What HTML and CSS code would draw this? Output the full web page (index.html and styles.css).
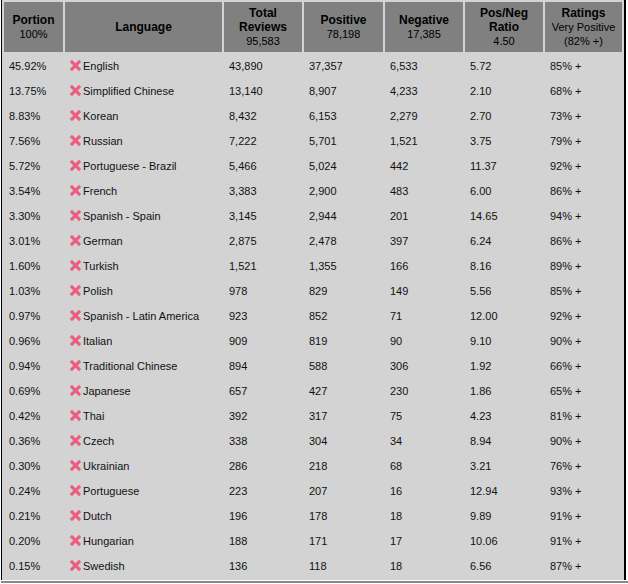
FILE: index.html
```html
<!DOCTYPE html>
<html lang="en">
<head>
    <meta charset="UTF-8">
    <meta name="viewport" content="width=device-width, initial-scale=1.0">
    <title>Reviews by Language</title>
    <link rel="stylesheet" href="styles.css">
</head>
<body>
    <div class="frame">
        <table class="reviews">
            <colgroup>
                <col class="c-portion">
                <col class="c-lang">
                <col class="c-total">
                <col class="c-pos">
                <col class="c-neg">
                <col class="c-ratio">
                <col class="c-rating">
            </colgroup>
            <thead>
                <tr>
                    <th><b>Portion</b><br>100%</th>
                    <th><b>Language</b></th>
                    <th><b>Total<br>Reviews</b><br>95,583</th>
                    <th><b>Positive</b><br>78,198</th>
                    <th><b>Negative</b><br>17,385</th>
                    <th><b>Pos/Neg<br>Ratio</b><br>4.50</th>
                    <th><b>Ratings</b><br>Very Positive<br>(82% +)</th>
                </tr>
            </thead>
            <tbody>
                <tr><td>45.92%</td><td><span class="x"></span>English</td><td>43,890</td><td>37,357</td><td>6,533</td><td>5.72</td><td>85% +</td></tr>
                <tr><td>13.75%</td><td><span class="x"></span>Simplified Chinese</td><td>13,140</td><td>8,907</td><td>4,233</td><td>2.10</td><td>68% +</td></tr>
                <tr><td>8.83%</td><td><span class="x"></span>Korean</td><td>8,432</td><td>6,153</td><td>2,279</td><td>2.70</td><td>73% +</td></tr>
                <tr><td>7.56%</td><td><span class="x"></span>Russian</td><td>7,222</td><td>5,701</td><td>1,521</td><td>3.75</td><td>79% +</td></tr>
                <tr><td>5.72%</td><td><span class="x"></span>Portuguese - Brazil</td><td>5,466</td><td>5,024</td><td>442</td><td>11.37</td><td>92% +</td></tr>
                <tr><td>3.54%</td><td><span class="x"></span>French</td><td>3,383</td><td>2,900</td><td>483</td><td>6.00</td><td>86% +</td></tr>
                <tr><td>3.30%</td><td><span class="x"></span>Spanish - Spain</td><td>3,145</td><td>2,944</td><td>201</td><td>14.65</td><td>94% +</td></tr>
                <tr><td>3.01%</td><td><span class="x"></span>German</td><td>2,875</td><td>2,478</td><td>397</td><td>6.24</td><td>86% +</td></tr>
                <tr><td>1.60%</td><td><span class="x"></span>Turkish</td><td>1,521</td><td>1,355</td><td>166</td><td>8.16</td><td>89% +</td></tr>
                <tr><td>1.03%</td><td><span class="x"></span>Polish</td><td>978</td><td>829</td><td>149</td><td>5.56</td><td>85% +</td></tr>
                <tr><td>0.97%</td><td><span class="x"></span>Spanish - Latin America</td><td>923</td><td>852</td><td>71</td><td>12.00</td><td>92% +</td></tr>
                <tr><td>0.96%</td><td><span class="x"></span>Italian</td><td>909</td><td>819</td><td>90</td><td>9.10</td><td>90% +</td></tr>
                <tr><td>0.94%</td><td><span class="x"></span>Traditional Chinese</td><td>894</td><td>588</td><td>306</td><td>1.92</td><td>66% +</td></tr>
                <tr><td>0.69%</td><td><span class="x"></span>Japanese</td><td>657</td><td>427</td><td>230</td><td>1.86</td><td>65% +</td></tr>
                <tr><td>0.42%</td><td><span class="x"></span>Thai</td><td>392</td><td>317</td><td>75</td><td>4.23</td><td>81% +</td></tr>
                <tr><td>0.36%</td><td><span class="x"></span>Czech</td><td>338</td><td>304</td><td>34</td><td>8.94</td><td>90% +</td></tr>
                <tr><td>0.30%</td><td><span class="x"></span>Ukrainian</td><td>286</td><td>218</td><td>68</td><td>3.21</td><td>76% +</td></tr>
                <tr><td>0.24%</td><td><span class="x"></span>Portuguese</td><td>223</td><td>207</td><td>16</td><td>12.94</td><td>93% +</td></tr>
                <tr><td>0.21%</td><td><span class="x"></span>Dutch</td><td>196</td><td>178</td><td>18</td><td>9.89</td><td>91% +</td></tr>
                <tr><td>0.20%</td><td><span class="x"></span>Hungarian</td><td>188</td><td>171</td><td>17</td><td>10.06</td><td>91% +</td></tr>
                <tr><td>0.15%</td><td><span class="x"></span>Swedish</td><td>136</td><td>118</td><td>18</td><td>6.56</td><td>87% +</td></tr>
            </tbody>
        </table>
    </div>
    <div class="bottom_line"></div>
</body>
</html>
```

FILE: styles.css
```css
*{
    margin: 0;
    padding: 0;
    box-sizing: border-box;
}
html{
    background: #ffffff;
    font-family: "Liberation Sans", Arial, sans-serif;
    font-size: 11px;
    color: #111111;
}
body{
    width: 628px;
    height: 584px;
    overflow: hidden;
}
.frame{
    margin-left: 1px;
    width: 625px;
    height: 580px;
    background: #d3d3d3;
    border-left: 1px solid #000000;
    border-right: 2px solid #000000;
}
.bottom_line{
    margin-top: 1px;
    margin-left: 1px;
    width: 627px;
    height: 2px;
    background: #8a8a8a;
}
.reviews{
    table-layout: fixed;
    width: 622px;
    border-collapse: separate;
    border-spacing: 2px;
}
.c-portion { width: 59px; }
.c-lang { width: 157px; }
.c-total { width: 78px; }
.c-pos { width: 79px; }
.c-neg { width: 78px; }
.c-ratio { width: 78px; }
.c-rating { width: 77px; }

.reviews th{
    height: 50px;
    background: #808080;
    color: #000000;
    font-weight: normal;
    font-size: 11px;
    text-align: center;
    vertical-align: middle;
    line-height: 14px;
    padding: 0 2px;
}
.reviews th b{
    font-weight: bold;
    font-size: 12px;
}
.reviews td{
    height: 23px;
    padding: 0 5px;
    white-space: nowrap;
    vertical-align: middle;
}
.x{
    display: inline-block;
    width: 11px;
    height: 11px;
    margin-right: 2px;
    vertical-align: -1px;
    position: relative;
}
.x::before,
.x::after{
    content: "";
    position: absolute;
    left: -1px;
    top: 4px;
    width: 13px;
    height: 3px;
    background: #ee5b80;
    transform: rotate(45deg);
}
.x::after{
    transform: rotate(-45deg);
}
```
